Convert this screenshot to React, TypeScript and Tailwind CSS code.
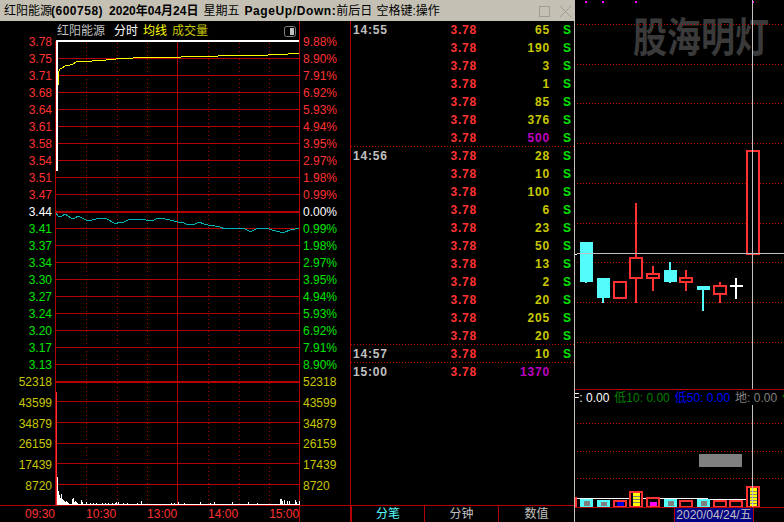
import React from "react";

const RED = "#ff3232";
const GRID = "#b40000";
const CYAN = "#54fcfc";

const sans = "font-['Liberation_Sans','Noto_Sans_CJK_SC',sans-serif]";

const upPrices = ["3.78", "3.75", "3.71", "3.68", "3.64", "3.61", "3.58", "3.54", "3.51", "3.47"];
const downPrices = ["3.41", "3.37", "3.34", "3.30", "3.27", "3.24", "3.20", "3.17", "3.13"];
const upPct = ["9.88%", "8.90%", "7.91%", "6.92%", "5.93%", "4.94%", "3.95%", "2.97%", "1.98%", "0.99%"];
const downPct = ["0.99%", "1.98%", "2.97%", "3.95%", "4.94%", "5.93%", "6.92%", "7.91%", "8.90%"];
const vols = ["43599", "34879", "26159", "17439", "8720"];

const avgLine =
  "58,85 58,76 59,71 60,69 62,68 65,66 70,65 73,64 76,62 85,61 92,61 100,60 106,60 107,59 116,59 117,58 133,58 134,57 181,57 182,56 218,56 219,55 268,55 269,54 288,54 289,53 299,53";
const priceLine =
  "56,213 58,216 60,217 62,216 65,214 68,216 71,218 74,219 78,216 82,218 86,220 92,220 100,218 105,218 109,220 112,222 116,224 119,222 124,222 128,220 133,219 140,219 146,220 152,221 156,219 160,218 165,219 170,220 178,222 182,222 186,224 195,224 199,222 204,224 208,225 215,226 220,227 225,229 232,228 240,228 245,229 249,231 252,231 256,229 262,228 266,228 272,230 276,231 280,232 285,232 290,230 295,229 299,228";

// [x, height] of the white minute bars
const minuteBars: [number, number][] = [
  [57, 28], [58, 14], [59, 10], [60, 7], [61, 11], [62, 6], [63, 5], [64, 4], [65, 3], [66, 4], [67, 3], [68, 2],
  [72, 6], [73, 7], [74, 3], [75, 4], [76, 3], [77, 2], [81, 5], [82, 3], [86, 3], [90, 2], [93, 2], [96, 2],
  [102, 2], [105, 2], [108, 2], [112, 2], [115, 2], [116, 3], [118, 3], [123, 2], [127, 2], [137, 2], [141, 4],
  [171, 2], [174, 2], [178, 3], [184, 2], [200, 3], [210, 2], [214, 3], [232, 3], [248, 3], [257, 2], [280, 6],
  [281, 6], [282, 4], [284, 5], [287, 4], [289, 4], [295, 5], [296, 3], [299, 4],
];

type Candle = { x: number; w: number; top: number; bottom: number; hi: number; lo: number; up: boolean };

const candles: Candle[] = [
  { x: 580, w: 13, top: 242, bottom: 282, hi: 242, lo: 283, up: false },
  { x: 597, w: 13, top: 278, bottom: 298, hi: 278, lo: 303, up: false },
  { x: 613, w: 14, top: 281, bottom: 299, hi: 281, lo: 299, up: true },
  { x: 629, w: 14, top: 257, bottom: 279, hi: 203, lo: 303, up: true },
  { x: 646, w: 14, top: 273, bottom: 279, hi: 266, lo: 291, up: true },
  { x: 664, w: 13, top: 270, bottom: 282, hi: 262, lo: 283, up: false },
  { x: 679, w: 14, top: 277, bottom: 283, hi: 270, lo: 291, up: true },
  { x: 697, w: 13, top: 286, bottom: 290, hi: 286, lo: 311, up: false },
  { x: 713, w: 14, top: 285, bottom: 295, hi: 282, lo: 303, up: true },
  { x: 746, w: 14, top: 150, bottom: 255, hi: 150, lo: 255, up: true },
];

type VolBar = { x: number; w: number; top: number; up: boolean; inner?: string; innerTop?: number; stripes?: boolean };

const volBars: VolBar[] = [
  { x: 580, w: 13, top: 499, up: false, inner: "#808080", innerTop: 501, stripes: true },
  { x: 597, w: 13, top: 500, up: false, inner: "#808080", innerTop: 502 },
  { x: 613, w: 14, top: 500, up: true, inner: "#0000e0", innerTop: 502 },
  { x: 629, w: 14, top: 491, up: true, inner: "#ffff00", innerTop: 493, stripes: true },
  { x: 646, w: 14, top: 497, up: true, inner: "#ff00ff", innerTop: 502 },
  { x: 664, w: 13, top: 499, up: false, inner: "#808080", innerTop: 501 },
  { x: 679, w: 14, top: 500, up: true },
  { x: 697, w: 13, top: 499, up: false, inner: "#808080", innerTop: 501 },
  { x: 713, w: 14, top: 500, up: true },
  { x: 729, w: 14, top: 500, up: true },
  { x: 746, w: 14, top: 486, up: true, inner: "#ffff00", innerTop: 488, stripes: true },
];

type Trade = { time?: string; vol: string; purple?: boolean; side?: boolean; line?: boolean };

const trades: Trade[] = [
  { time: "14:55", vol: "65" },
  { vol: "190" },
  { vol: "3" },
  { vol: "1" },
  { vol: "85" },
  { vol: "376" },
  { vol: "500", purple: true, line: true },
  { time: "14:56", vol: "28" },
  { vol: "10" },
  { vol: "100" },
  { vol: "6" },
  { vol: "23" },
  { vol: "50" },
  { vol: "13" },
  { vol: "2" },
  { vol: "20" },
  { vol: "205" },
  { vol: "20", line: true },
  { time: "14:57", vol: "10", line: true },
  { time: "15:00", vol: "1370", purple: true, side: false },
];

const AxisRows = ({ items, color, h }: { items: string[]; color: string; h: string }) => (
  <>
    {items.map((t, i) => (
      <div key={i} className={`flex items-center shrink-0 ${h} ${color}`}>
        {t}
      </div>
    ))}
  </>
);

const PriceChart = () => {
  const priceRows = [41, 58, 75, 92, 109, 126, 143, 160, 177, 194, 228, 245, 262, 279, 296, 313, 330, 347, 364];
  const volRows = [401, 422, 443, 463, 484];
  const dotted = [86, 117, 147, 208, 239, 269];
  return (
    <svg width={245} height={484} viewBox="55 21 245 484" shapeRendering="crispEdges" className="block shrink-0">
      {priceRows.concat(volRows).map((y) => (
        <rect key={y} x={56} y={y} width={243} height={1} fill={GRID} />
      ))}
      <rect x={56} y={211} width={243} height={2} fill={GRID} />
      <rect x={56} y={381} width={243} height={2} fill={GRID} />
      <rect x={55} y={41} width={1} height={464} fill={GRID} />
      <rect x={177} y={41} width={1} height={464} fill={GRID} />
      <rect x={299} y={21} width={1} height={484} fill={GRID} />
      {dotted.map((x) => (
        <line key={x} x1={x + 0.5} x2={x + 0.5} y1={43} y2={505} stroke={GRID} strokeDasharray="1 3" />
      ))}
      <rect x={56} y={40} width={243} height={2} fill="#ffffff" />
      <rect x={56} y={41} width={2} height={130} fill="#ffffff" />
      <polyline points={avgLine} fill="none" stroke="#ffff00" />
      <polyline points={priceLine} fill="none" stroke="#00b4b4" />
      <rect x={56} y={392} width={1} height={113} fill={RED} />
      <rect x={57} y={504} width={242} height={1} fill="#ffffff" />
      {minuteBars.map(([x, h]) => (
        <rect key={x} x={x} y={505 - h} width={1} height={h} fill="#ffffff" />
      ))}
    </svg>
  );
};

const LeftPanel = () => (
  <div className={`flex flex-col w-[351px] shrink-0 border-r border-[#b40000] text-[12px] leading-none ${sans}`}>
    <div className="flex h-[484px]">
      <div className="flex flex-col items-end w-[55px] pr-[3px] pt-[12px] shrink-0">
        <AxisRows items={upPrices} color="text-[#ff3232]" h="h-[17px]" />
        <AxisRows items={["3.44"]} color="text-white" h="h-[17px]" />
        <AxisRows items={downPrices} color="text-[#00e600]" h="h-[17px]" />
        <AxisRows items={["52318"]} color="text-[#c8c800]" h="h-[17px]" />
        <div className="h-[3px] shrink-0" />
        <AxisRows items={vols} color="text-[#c8c800]" h="h-[20.6px]" />
      </div>
      <div className="relative shrink-0">
        <PriceChart />
        <div className="absolute left-[2px] top-[1px] h-[18px] w-[232px] flex items-center text-[12px]">
          <span className="text-[#c0c0c0]">红阳能源</span>
          <span className="ml-[9px] text-white">分时</span>
          <span className="ml-[5px] text-[#ffff00]">均线</span>
          <span className="ml-[5px] text-[#c8c800]">成交量</span>
        </div>
        <svg width={12} height={11} viewBox="0 0 12 11" className="absolute left-[229px] top-[5px]">
          <rect x={0.5} y={0.5} width={11} height={10} rx={2} fill="none" stroke="#808080" />
          <rect x={6} y={2} width={4} height={7} fill="#c0c0c0" />
        </svg>
      </div>
      <div className="flex flex-col flex-1 pl-[3px] pt-[12px]">
        <AxisRows items={upPct} color="text-[#ff3232]" h="h-[17px]" />
        <AxisRows items={["0.00%"]} color="text-white" h="h-[17px]" />
        <AxisRows items={downPct} color="text-[#00e600]" h="h-[17px]" />
        <AxisRows items={["52318"]} color="text-[#c8c800]" h="h-[17px]" />
        <div className="h-[3px] shrink-0" />
        <AxisRows items={vols} color="text-[#c8c800]" h="h-[20.6px]" />
      </div>
    </div>
    <div className="flex items-center h-[17px] border-t border-[#b40000] -mr-px">
      <div className="flex w-[300px] h-full items-center pl-[25px] gap-[31px] border-r border-[#b40000] text-[#ff3232]">
        <span>09:30</span>
        <span>10:30</span>
        <span>13:00</span>
        <span>14:00</span>
        <span>15:00</span>
      </div>
    </div>
  </div>
);

const TradeRow = ({ t }: { t: Trade }) => (
  <div
    className={`flex items-center h-[18px] pl-[2px] font-bold tracking-[0.8px] ${
      t.line
        ? "bg-[repeating-linear-gradient(90deg,#c00000_0_1px,transparent_1px_3px)] bg-[length:100%_1px] bg-bottom bg-no-repeat"
        : ""
    }`}
  >
    <span className="w-[37px] shrink-0 text-[#c0c0c0]">{t.time}</span>
    <span className="w-[87px] shrink-0 text-right text-[#ff3232]">3.78</span>
    <span className={`w-[73px] shrink-0 text-right ${t.purple ? "text-[#c000c0]" : "text-[#c8c800]"}`}>{t.vol}</span>
    {t.side !== false && <span className="ml-[13px] text-[#00e600]">S</span>}
  </div>
);

const TradePanel = () => (
  <div className={`flex flex-col w-[223px] shrink-0 text-[12px] leading-none ${sans}`}>
    <div className="h-[484px]">
      {trades.map((t, i) => (
        <TradeRow key={i} t={t} />
      ))}
    </div>
    <div className="flex h-[17px] border-t border-l border-[#b40000] text-[12px] text-[#c0c0c0]">
      <div className="flex items-center justify-center w-[73px] border-r border-[#b40000] text-[#54fcfc]">分笔</div>
      <div className="flex items-center justify-center w-[74px] border-r border-[#b40000]">分钟</div>
      <div className="flex items-center justify-center flex-1">数值</div>
    </div>
  </div>
);

const TitleBar = () => (
  <div className={`flex items-center h-[21px] pl-[4px] bg-[#c4c0b4] text-[12px] text-black ${sans}`}>
    <span>红阳能源</span>
    <span className="font-bold tracking-[0.5px] -ml-px">(600758)</span>
    <span className="ml-[6px] font-bold">2020年04月24日</span>
    <span className="ml-[5px]">星期五</span>
    <span className="ml-[5px] font-bold tracking-[0.6px]">PageUp/Down:</span>
    <span>前后日</span>
    <span className="ml-[4px]">空格键:操作</span>
    <svg width={33} height={12} viewBox="0 0 33 12" className="ml-auto mr-[2px]" shapeRendering="crispEdges">
      <rect x={0.5} y={1.5} width={10} height={10} fill="none" stroke="#a09c94" />
      <path d="M21 1 L32 12 M32 1 L21 12" stroke="#a09c94" fill="none" shapeRendering="auto" />
    </svg>
  </div>
);

const CandleChart = () => {
  const rows = [24, 64, 103, 143, 183, 223, 262, 302, 342];
  return (
    <svg width={209} height={389} viewBox="575 0 209 389" shapeRendering="crispEdges" className="relative block">
      {rows.map((y) => (
        <line key={y} x1={577} x2={784} y1={y + 0.5} y2={y + 0.5} stroke="#c00000" strokeDasharray="1 2" />
      ))}
      {[586, 603, 636, 753].map((x) => (
        <rect key={x} x={x - 1} y={1} width={2} height={2} fill="#ff00ff" />
      ))}
      {candles.map((c) => {
        const cx = c.x + Math.floor(c.w / 2) - 1;
        const color = c.up ? RED : CYAN;
        return (
          <g key={c.x}>
            <rect x={cx} y={c.hi} width={2} height={c.lo - c.hi} fill={color} />
            {c.up ? (
              <rect x={c.x + 1} y={c.top + 1} width={c.w - 2} height={c.bottom - c.top - 2} fill="#000000" stroke={color} strokeWidth={2} />
            ) : (
              <rect x={c.x} y={c.top} width={c.w} height={c.bottom - c.top} fill={color} />
            )}
          </g>
        );
      })}
      <rect x={730} y={285} width={13} height={2} fill="#ffffff" />
      <rect x={735} y={278} width={2} height={21} fill="#ffffff" />
      <rect x={577} y={253} width={207} height={1} fill="#c0c0c0" />
      <rect x={575} y={254} width={2} height={1} fill="#ffffff" />
      <rect x={752} y={0} width={1} height={389} fill="#c0c0c0" />
    </svg>
  );
};

const VolumeChart = () => {
  const rows = [423, 451, 478];
  return (
    <svg width={209} height={102} viewBox="575 405 209 102" shapeRendering="crispEdges" className="block">
      {rows.map((y) => (
        <line key={y} x1={577} x2={784} y1={y + 0.5} y2={y + 0.5} stroke="#c00000" strokeDasharray="1 2" />
      ))}
      <rect x={699} y={454} width={43} height={13} fill="#808080" />
      <rect x={575} y={497} width={2} height={10} fill={RED} />
      <rect x={577} y={498} width={131} height={1} fill="#ffffff" />
      <rect x={708} y={499} width={38} height={1} fill="#ffffff" />
      {volBars.map((b) => {
        const color = b.up ? RED : CYAN;
        const iTop = b.innerTop ?? b.top;
        return (
          <g key={b.x}>
            {b.up ? (
              <rect x={b.x + 1} y={b.top + 1} width={b.w - 2} height={506 - b.top} fill="#000000" stroke={color} strokeWidth={2} />
            ) : (
              <rect x={b.x} y={b.top} width={b.w} height={507 - b.top} fill={color} />
            )}
            {b.inner && <rect x={b.x + 4} y={iTop} width={b.w - 7} height={506 - iTop} fill={b.inner} />}
            {b.stripes &&
              [iTop + 3, iTop + 6, iTop + 9, iTop + 12, iTop + 15]
                .filter((y) => y < 505)
                .map((y) => <rect key={y} x={b.x + 4} y={y} width={b.w - 7} height={1} fill="#808080" />)}
          </g>
        );
      })}
      <rect x={752} y={405} width={1} height={102} fill="#c0c0c0" />
    </svg>
  );
};

const RightPanel = () => (
  <div className="flex flex-col w-[209px] shrink-0 overflow-hidden">
    <div className="relative h-[389px]">
      <div className="absolute left-[58px] top-[12px] origin-top scale-y-[1.2] font-['Noto_Sans_CJK_SC',sans-serif] font-bold text-[34px] leading-[38px] text-[#3a3a3a] whitespace-nowrap">
        股海明灯
      </div>
      <CandleChart />
    </div>
    <div className={`flex items-center h-[16px] border-t border-[#b40000] whitespace-nowrap overflow-hidden text-[12px] ${sans}`}>
      <span className="-ml-[3px] text-white">F: 0.00</span>
      <span className="ml-[5px] text-[#008000]">低10: 0.00</span>
      <span className="ml-[5px] text-[#0000ff]">低50: 0.00</span>
      <span className="ml-[5px] text-[#808080]">地: 0.00</span>
      <span className="ml-[5px] text-[#008000]">低</span>
    </div>
    <VolumeChart />
    <div className={`flex h-[15px] border-t border-[#b40000] pl-[99px] ${sans}`}>
      <div className="flex items-center justify-center w-[80px] bg-[#000080] border-x border-[#b40000] text-[12px] text-[#c0c0c0] whitespace-nowrap">
        2020/04/24/五
      </div>
    </div>
  </div>
);

export default function App() {
  return (
    <div className="flex w-[784px] h-[522px] bg-black overflow-hidden">
      <div className="flex flex-col w-[574px] shrink-0">
        <TitleBar />
        <div className="flex flex-1">
          <LeftPanel />
          <TradePanel />
        </div>
      </div>
      <div className="w-[1px] shrink-0 bg-[#c4c0b4]" />
      <RightPanel />
    </div>
  );
}
